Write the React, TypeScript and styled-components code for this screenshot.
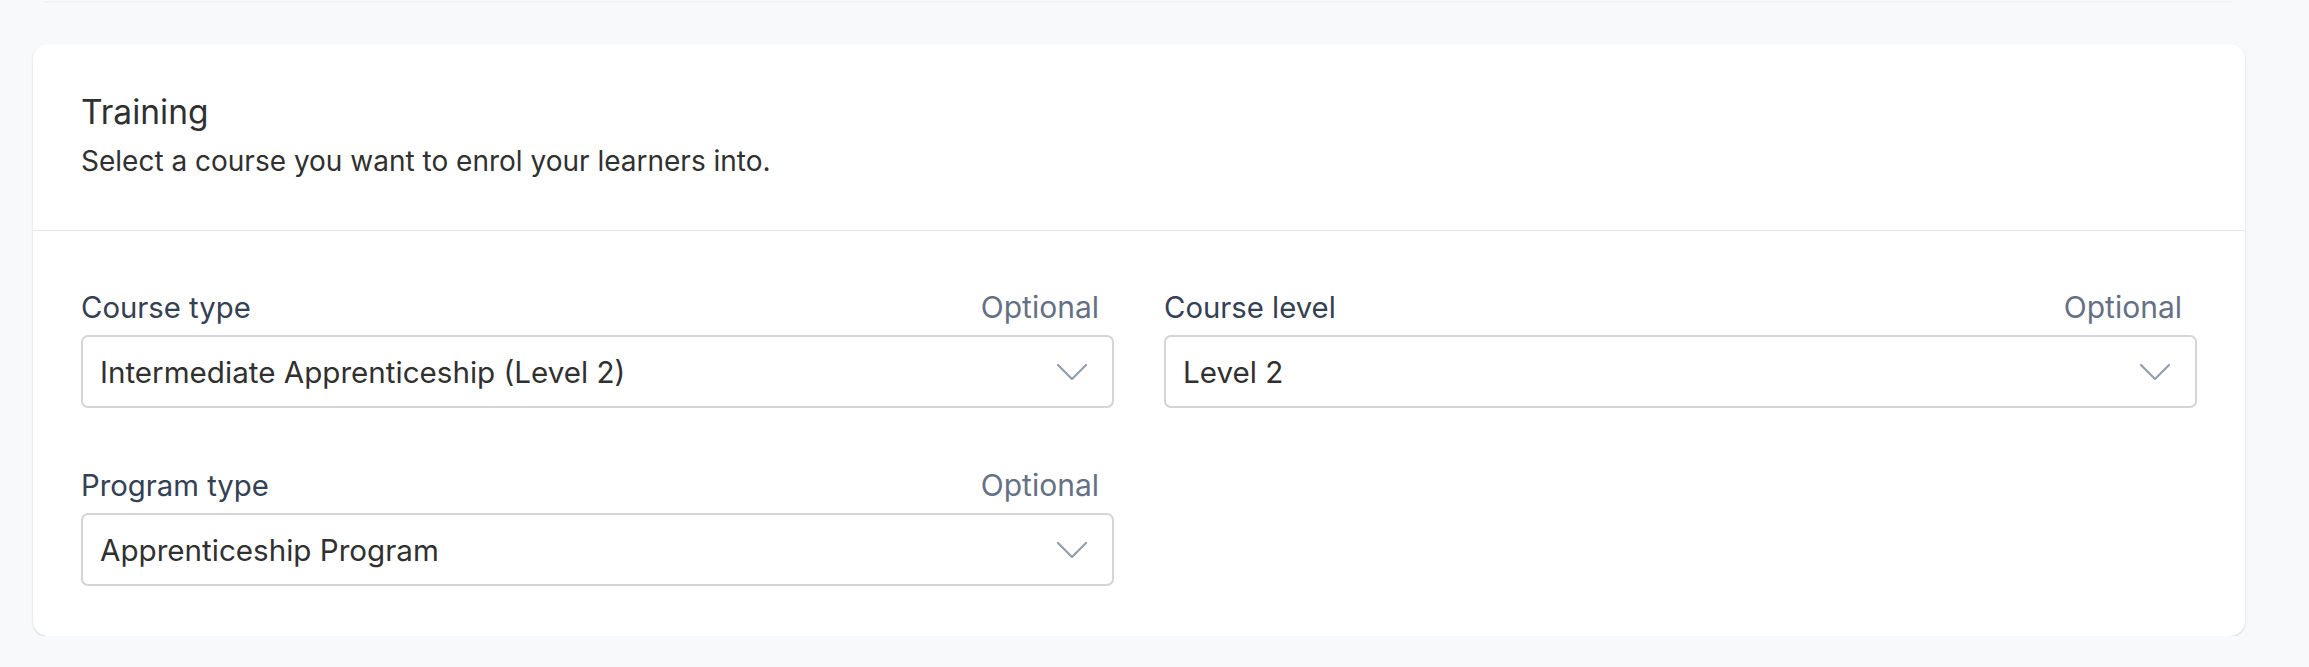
import React from 'react'
import styled, { createGlobalStyle } from 'styled-components'

const GlobalStyle = createGlobalStyle`
  * { box-sizing: border-box; }
  body {
    margin: 0;
    background: #f8f9fb;
    font-family: Inter, "Noto Sans", sans-serif;
    -webkit-font-smoothing: antialiased;
  }
`

const Page = styled.div`
  padding: 0 64px 0 33px;
`

// bottom edge of the card above, scrolled out of view
const PrevCard = styled.div`
  height: 1px;
  margin: 0 12px;
  background: #fcfcfd;
  box-shadow: 0 1px 2px rgba(16, 24, 40, 0.08);
`

const Card = styled.section`
  margin-top: 43px;
  background: #fff;
  border-radius: 15px;
  box-shadow: 0 1px 3px rgba(16, 24, 40, 0.1), 0 1px 2px rgba(16, 24, 40, 0.06);
`

const Header = styled.header`
  padding: 48px 48px 52px;
  border-bottom: 1.5px solid #e6e7ea;
`

const Title = styled.h2`
  margin: 0 0 12px;
  font-size: 33.5px;
  line-height: 40px;
  font-weight: 400;
  color: #303030;
`

const Subtitle = styled.p`
  margin: 0;
  font-size: 28px;
  line-height: 34px;
  color: #303030;
`

const Body = styled.div`
  display: grid;
  grid-template-columns: 1fr 1fr;
  column-gap: 50px;
  row-gap: 59px;
  padding: 58px 48px 50px;
`

const Field = styled.div`
  display: flex;
  flex-direction: column;
  gap: 9px;
`

const LabelRow = styled.div`
  display: flex;
  justify-content: space-between;
  align-items: baseline;
  padding-right: 15px;
  line-height: 36px;
`

const Label = styled.label`
  font-size: 29.3px;
  color: #344054;
`

const Hint = styled.span`
  font-size: 30px;
  color: #667085;
`

const Trigger = styled.button`
  display: flex;
  align-items: center;
  justify-content: space-between;
  height: 73px;
  width: 100%;
  padding: 0 24px 0 17px;
  background: #fff;
  border: 2px solid #d4d5d7;
  border-radius: 7px;
  font-family: inherit;
  font-size: 29.6px;
  color: #303030;
  text-align: left;
  cursor: pointer;
`

const Chevron = () => (
  <svg width="32" height="18" viewBox="0 0 32 18" fill="none">
    <polyline
      points="2,2 16,16 30,2"
      stroke="#959eae"
      strokeWidth="2.2"
      strokeLinecap="round"
      strokeLinejoin="round"
    />
  </svg>
)

type SelectFieldProps = {
  label: string
  value: string
  optional?: boolean
}

const SelectField = ({ label, value, optional }: SelectFieldProps) => (
  <Field>
    <LabelRow>
      <Label>{label}</Label>
      {optional && <Hint>Optional</Hint>}
    </LabelRow>
    <Trigger type="button">
      <span>{value}</span>
      <Chevron />
    </Trigger>
  </Field>
)

export default function App() {
  return (
    <>
      <GlobalStyle />
      <Page>
        <PrevCard />
        <Card>
          <Header>
            <Title>Training</Title>
            <Subtitle>Select a course you want to enrol your learners into.</Subtitle>
          </Header>
          <Body>
            <SelectField label="Course type" value="Intermediate Apprenticeship (Level 2)" optional />
            <SelectField label="Course level" value="Level 2" optional />
            <SelectField label="Program type" value="Apprenticeship Program" optional />
          </Body>
        </Card>
      </Page>
    </>
  )
}
